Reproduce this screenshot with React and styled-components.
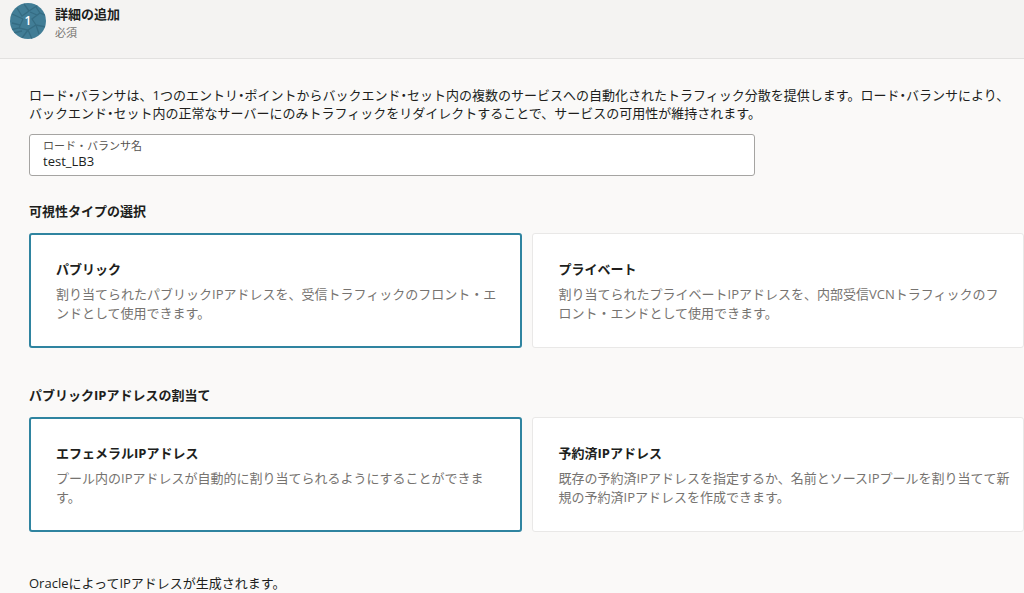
import React, { Fragment, useState } from "react";
import styled, { createGlobalStyle, css } from "styled-components";

const GlobalStyle = createGlobalStyle`
  *, *::before, *::after { box-sizing: border-box; }
  body {
    margin: 0;
    background: #faf9f8;
    color: #201e1c;
    font-family: "Open Sans", "Noto Sans CJK JP", sans-serif;
    font-size: 13px;
    line-height: 19px;
    overflow-x: hidden;
  }
`;

const StepHeader = styled.header`
  display: flex;
  align-items: flex-start;
  gap: 9px;
  height: 59px;
  padding: 3px 10px 0;
  background: #f4f3f2;
  border-bottom: 1px solid #e2e1e0;
`;

const StepBadge = styled.svg`
  width: 36px;
  height: 36px;
  flex: none;
`;

const StepText = styled.div`
  padding-top: 2px;
`;

const StepTitle = styled.h1`
  margin: 0;
  font-size: 13px;
  line-height: 19px;
`;

const StepNote = styled.p`
  margin: 0;
  font-size: 11px;
  line-height: 18px;
  color: #767370;
`;

const Content = styled.main`
  padding: 27px 0 0 29px;
`;

const Intro = styled.p`
  margin: 0;
  line-height: 18px;
  white-space: nowrap;
`;

/* Half-width setting of the middle dot between katakana words. */
const MiddleDot = styled.span`
  font-feature-settings: "halt";
`;

const Field = styled.div`
  display: flex;
  flex-direction: column;
  width: 73%;
  margin: 12px 0 26px;
  padding: 3px 13px 5px;
  background: #fff;
  border: 1px solid #a5a4a2;
  border-radius: 3px;
  &:focus-within { border-color: #227e9e; }
`;

const FieldLabel = styled.label`
  font-size: 11px;
  line-height: 15px;
  color: #565350;
`;

const FieldInput = styled.input`
  height: 17px;
  padding: 0;
  border: 0;
  outline: 0;
  background: transparent;
  color: inherit;
  font: inherit;
  line-height: 17px;
`;

const Group = styled.fieldset`
  min-width: 0;
  margin: 0 0 38px;
  padding: 0;
  border: 0;
`;

const GroupTitle = styled.legend`
  padding: 0 0 12px;
  font-weight: 700;
`;

const Cards = styled.div`
  display: grid;
  grid-template-columns: 1fr 1fr;
  gap: 10px;
`;

const Card = styled.label`
  display: block;
  padding: 26px 8px 24px 26px;
  background: #fff;
  border: 1px solid #e9e8e7;
  border-radius: 3px;
  cursor: pointer;
  ${(p) => p.$selected && css`
    padding: 25px 7px 23px 25px;
    border: 2px solid #2f84a0;
  `}
`;

const HiddenRadio = styled.input`
  position: absolute;
  opacity: 0;
  pointer-events: none;
`;

const CardTitle = styled.span`
  display: block;
  margin-bottom: 6px;
  font-weight: 700;
`;

const CardText = styled.span`
  display: block;
  color: #767370;
`;

const Result = styled.p`
  margin: 0;
  padding-top: 4px;
`;

const introLines = [
  "ロード・バランサは、1つのエントリ・ポイントからバックエンド・セット内の複数のサービスへの自動化されたトラフィック分散を提供します。ロード・バランサにより、",
  "バックエンド・セット内の正常なサーバーにのみトラフィックをリダイレクトすることで、サービスの可用性が維持されます。",
];

const visibility = [
  { id: "public", title: "パブリック", lines: ["割り当てられたパブリックIPアドレスを、受信トラフィックのフロント・エ", "ンドとして使用できます。"] },
  { id: "private", title: "プライベート", lines: ["割り当てられたプライベートIPアドレスを、内部受信VCNトラフィックのフ", "ロント・エンドとして使用できます。"] },
];

const addresses = [
  { id: "ephemeral", title: "エフェメラルIPアドレス", lines: ["プール内のIPアドレスが自動的に割り当てられるようにすることができま", "す。"] },
  { id: "reserved", title: "予約済IPアドレス", lines: ["既存の予約済IPアドレスを指定するか、名前とソースIPプールを割り当てて新", "規の予約済IPアドレスを作成できます。"] },
];

function CompactDots({ text }) {
  return text.split("・").map((part, i) => (
    <Fragment key={i}>
      {i > 0 && <MiddleDot>・</MiddleDot>}
      {part}
    </Fragment>
  ));
}

function CardGroup({ name, title, options }) {
  const [value, setValue] = useState(options[0].id);
  return (
    <Group>
      <GroupTitle>{title}</GroupTitle>
      <Cards>
        {options.map((o) => (
          <Card key={o.id} $selected={o.id === value}>
            <HiddenRadio type="radio" name={name} value={o.id} checked={o.id === value} onChange={() => setValue(o.id)} />
            <CardTitle>{o.title}</CardTitle>
            <CardText>{o.lines[0]}<br />{o.lines[1]}</CardText>
          </Card>
        ))}
      </Cards>
    </Group>
  );
}

function Badge() {
  return (
    <StepBadge viewBox="0 0 36 36" aria-label="1">
      <defs><clipPath id="disc"><circle cx="18" cy="18" r="18" /></clipPath></defs>
      <g clipPath="url(#disc)">
        <rect width="36" height="36" fill="#417d96" />
        <path d="M2 11l11 5M7 5l5 8 7-5 9-6M14 1l5 7M13 16l-4 9-9 2M9 25l9 2 4 9M18 27l-6 8M18 27l8-5 10 2M26 22l-4-6 8-6 7 3M30 10l-4-6M20 9l7 3M2 20l8 2M26 22l3 9M3 30l9-2" fill="none" stroke="#356c83" strokeWidth="1.3" />
      </g>
      <text x="18" y="22" textAnchor="middle" fontSize="12" fontWeight="600" fill="#fff">1</text>
    </StepBadge>
  );
}

export default function App() {
  const [name, setName] = useState("test_LB3");
  return (
    <>
      <GlobalStyle />
      <StepHeader>
        <Badge />
        <StepText>
          <StepTitle>詳細の追加</StepTitle>
          <StepNote>必須</StepNote>
        </StepText>
      </StepHeader>
      <Content>
        <Intro>
          <CompactDots text={introLines[0]} />
          <br />
          <CompactDots text={introLines[1]} />
        </Intro>
        <Field>
          <FieldLabel htmlFor="lb-name">ロード・バランサ名</FieldLabel>
          <FieldInput id="lb-name" value={name} onChange={(e) => setName(e.target.value)} />
        </Field>
        <CardGroup name="visibility" title="可視性タイプの選択" options={visibility} />
        <CardGroup name="address" title="パブリックIPアドレスの割当て" options={addresses} />
        <Result>OracleによってIPアドレスが生成されます。</Result>
      </Content>
    </>
  );
}
